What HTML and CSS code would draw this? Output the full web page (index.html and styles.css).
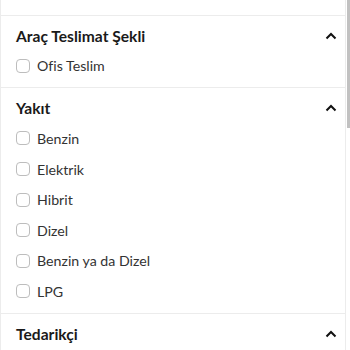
FILE: index.html
```html
<!DOCTYPE html>
<html lang="tr">
<head>
<meta charset="utf-8">
<link rel="stylesheet" href="styles.css">
</head>
<body>
<div class="frame">
  <div class="panel">
    <div class="prev">
      <div class="option"><span class="box"></span></div>
    </div>
    <section class="group">
      <div class="head"><h3>Araç Teslimat Şekli</h3>
        <svg class="chev" width="12" height="8" viewBox="0 0 12 8"><path d="M1.5 6.5 L6 2 L10.5 6.5" fill="none" stroke="#111" stroke-width="2"/></svg></div>
      <div class="option"><span class="box"></span><span class="label">Ofis Teslim</span></div>
    </section>
    <section class="group">
      <div class="head"><h3>Yakıt</h3>
        <svg class="chev" width="12" height="8" viewBox="0 0 12 8"><path d="M1.5 6.5 L6 2 L10.5 6.5" fill="none" stroke="#111" stroke-width="2"/></svg></div>
      <div class="option"><span class="box"></span><span class="label">Benzin</span></div>
      <div class="option"><span class="box"></span><span class="label">Elektrik</span></div>
      <div class="option"><span class="box"></span><span class="label">Hibrit</span></div>
      <div class="option"><span class="box"></span><span class="label">Dizel</span></div>
      <div class="option"><span class="box"></span><span class="label">Benzin ya da Dizel</span></div>
      <div class="option"><span class="box"></span><span class="label">LPG</span></div>
    </section>
    <section class="group">
      <div class="head"><h3>Tedarikçi</h3>
        <svg class="chev" width="12" height="8" viewBox="0 0 12 8"><path d="M1.5 6.5 L6 2 L10.5 6.5" fill="none" stroke="#111" stroke-width="2"/></svg></div>
    </section>
  </div>
  <div class="track"><div class="thumb"></div></div>
</div>
</body>
</html>
```
FILE: styles.css
```css
html, body {
  margin: 0;
  padding: 0;
  background: #fff;
}
body {
  font-family: "Lato", "Open Sans", sans-serif;
  color: #333;
  overflow: hidden;
  height: 350px;
}
.frame {
  display: flex;
  height: 350px;
  overflow: hidden;
}
.panel {
  width: 344px;
  border-left: 1px solid #ececec;
  border-right: 1px solid #ececec;
  flex: none;
  margin-top: -22px;
}
.prev {
  padding: 0 16px 6px 0;
}
.group {
  border-top: 1px solid #ececec;
  padding: 8px 0 6px 0;
}
.head {
  display: flex;
  align-items: center;
  justify-content: space-between;
  padding: 0 8px 0 15px;
  height: 24px;
  margin-bottom: 3px;
}
.head h3 {
  margin: 0;
  font-size: 15.6px;
  font-weight: 700;
  color: #1a1a1a;
}
.chev {
  display: block;
}
.option {
  display: flex;
  align-items: center;
  height: 30.6px;
  padding-left: 15px;
  gap: 7px;
}
.box {
  width: 12px;
  height: 12px;
  border: 1px solid #bdbdbd;
  border-radius: 4px;
  flex: none;
}
.label {
  font-size: 14.2px;
  color: #333;
}
.track {
  flex: 1;
  background: #fff;
}
.thumb {
  height: 128px;
  background: #c1c1c1;
  margin-left: 1px;
}
```
